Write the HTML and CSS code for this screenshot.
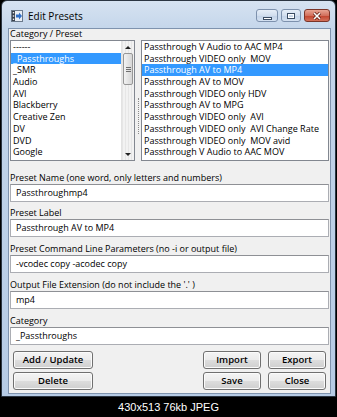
FILE: index.html
```html
<!doctype html>
<html lang="en">

<head>
<meta charset="utf-8">
<title>Edit Presets</title>

<link rel="stylesheet" href="styles.css">

</head>

<body>

<div id="shot">

  <div class="window">

    <!-- title bar -->
    <div class="titlebar">
      <svg class="app-icon" width="12" height="12" viewBox="0 0 12 12">
        <rect x="0.5" y="0.5" width="11" height="11" fill="#e9eef5" stroke="#6b7a8c"/>
        <rect x="1" y="1" width="3" height="10" fill="#39414d"/>
        <rect x="1.8" y="2" width="1.4" height="1.4" fill="#e9eef5"/>
        <rect x="1.8" y="5.3" width="1.4" height="1.4" fill="#e9eef5"/>
        <rect x="1.8" y="8.6" width="1.4" height="1.4" fill="#e9eef5"/>
        <path d="M5 4.5h3V2.5l3 3.5-3 3.5V7.5H5z" fill="#2f6fc8"/>
      </svg>
      <span class="title">Edit Presets</span>
      <div class="caption-buttons">
        <span class="cap min"><i></i></span>
        <span class="cap max"><i></i></span>
        <span class="cap close">
          <svg width="10" height="8" viewBox="0 0 10 8">
            <path d="M2 1l6 6M8 1L2 7" stroke="#5a1a10" stroke-width="3"/>
            <path d="M2 1l6 6M8 1L2 7" stroke="#fff" stroke-width="1.6"/>
          </svg>
        </span>
      </div>
    </div>

    <!-- client area -->
    <div class="client">
      <div class="top-label">Category / Preset</div>

      <div class="lists">
        <div class="listbox categories">
          <ul>
            <li>------</li>
            <li class="selected">_Passthroughs</li>
            <li>_SMR</li>
            <li>Audio</li>
            <li>AVI</li>
            <li>Blackberry</li>
            <li>Creative Zen</li>
            <li>DV</li>
            <li>DVD</li>
            <li>Google</li>
          </ul>
          <div class="vscroll">
            <span class="arrow up"></span>
            <div class="track">
              <div class="thumb"><i></i><i></i><i></i></div>
            </div>
            <span class="arrow down"></span>
          </div>
        </div>

        <div class="splitter"></div>

        <div class="listbox presets">
          <ul>
            <li>Passthrough V Audio to AAC MP4</li>
            <li>Passthrough VIDEO only  MOV</li>
            <li class="selected">Passthrough AV to MP4</li>
            <li>Passthrough AV to MOV</li>
            <li>Passthrough VIDEO only HDV</li>
            <li>Passthrough AV to MPG</li>
            <li>Passthrough VIDEO only  AVI</li>
            <li>Passthrough VIDEO only  AVI Change Rate</li>
            <li>Passthrough VIDEO only  MOV avid</li>
            <li>Passthrough V Audio to AAC MOV</li>
          </ul>
        </div>
      </div>

      <div class="fields">
        <div class="field">
          <label>Preset Name (one word, only letters and numbers)</label>
          <div class="textbox">Passthroughmp4</div>
        </div>
        <div class="field">
          <label>Preset Label</label>
          <div class="textbox">Passthrough AV to MP4</div>
        </div>
        <div class="field">
          <label>Preset Command Line Parameters (no -i or output file)</label>
          <div class="textbox">-vcodec copy -acodec copy</div>
        </div>
        <div class="field">
          <label>Output File Extension (do not include the '.' )</label>
          <div class="textbox">mp4</div>
        </div>
        <div class="field">
          <label>Category</label>
          <div class="textbox">_Passthroughs</div>
        </div>
      </div>

      <div class="buttons">
        <div class="button-col">
          <button class="wide">Add / Update</button>
          <button class="wide">Delete</button>
        </div>
        <div class="button-grid">
          <button>Import</button>
          <button>Export</button>
          <button>Save</button>
          <button>Close</button>
        </div>
      </div>
    </div>

  </div>

  <div class="thumb-caption">430x513 76kb JPEG</div>

</div>

</body>

</html>
```

FILE: styles.css
```css
html,
body {
  background: #000;
  margin: 0;
}

#shot {
  height: 417px;
  overflow: hidden;
  width: 337px;
}

#shot .window {
  background: linear-gradient(#d6e2f1, #c3d5ea 30px, #b6cbe5);
  border: 1px solid #2b3542;
  border-radius: 6px 6px 0 0;
  box-sizing: border-box;
  display: flex;
  flex-direction: column;
  font-family: "Open Sans", "Noto Sans", sans-serif;
  font-size: 9px;
  height: 397px;
  margin-left: 1px;
  width: 335px;
}

/* title bar */

#shot .titlebar {
  align-items: center;
  display: flex;
  flex: none;
  height: 27px;
}

#shot .titlebar .app-icon {
  margin-left: 9px;
  margin-top: 3px;
}

#shot .titlebar .title {
  color: #000;
  font-size: 10px;
  margin-left: 5px;
  margin-top: 3px;
}

#shot .caption-buttons {
  display: flex;
  gap: 3px;
  margin-left: auto;
  margin-right: 5px;
  margin-top: 2px;
}

#shot .cap {
  align-items: center;
  background: linear-gradient(#e6eef8, #d2deee 50%, #c2d2e7 51%, #d4e1f1);
  border: 1px solid #7d91ad;
  border-radius: 3px;
  box-sizing: border-box;
  display: flex;
  height: 13px;
  justify-content: center;
  width: 22px;
}

#shot .cap.max {
  width: 20px;
}

#shot .cap.close {
  background: linear-gradient(#e8a493, #d2705d 50%, #c1422c 51%, #d3705a);
  border-color: #7a3428;
  width: 26px;
}

#shot .cap.min i {
  background: #fff;
  border: 1px solid #3b4c63;
  height: 1px;
  margin-top: 5px;
  width: 7px;
}

#shot .cap.max i {
  border: 1px solid #3b4c63;
  box-shadow: inset 0 0 0 1px #fff;
  height: 4px;
  width: 6px;
}

/* client area */

#shot .client {
  background: #f0f0f0;
  border: 1px solid #7f93ae;
  box-sizing: border-box;
  flex: 1;
  margin: 0 4px 2px 6px;
  padding: 0 1px;
}

#shot .top-label {
  height: 11px;
  line-height: 10px;
}

#shot .lists {
  display: flex;
  height: 121px;
}

#shot .listbox {
  background: #fff;
  border: 1px solid #828790;
  box-sizing: border-box;
  display: flex;
  overflow: hidden;
}

#shot .listbox.categories {
  width: 125px;
}

#shot .listbox.presets {
  flex: 1;
}

#shot .listbox ul {
  flex: 1;
  list-style: none;
  margin: 0;
  overflow: hidden;
  padding: 0;
}

#shot .listbox li {
  height: 11.7px;
  line-height: 11.7px;
  padding-left: 2px;
  white-space: pre;
}

#shot .listbox li.selected {
  background: #3399ff;
  color: #fff;
}

#shot .splitter {
  display: flex;
  justify-content: center;
  width: 6px;
}

#shot .splitter::before {
  border-left: 1px dotted #8a8a8a;
  content: "";
  height: 36px;
  margin-top: 58px;
}

/* scrollbar */

#shot .vscroll {
  background: repeating-linear-gradient(90deg, #e6e6e6 0 1px, #f2f2f2 1px 3px);
  border-left: 1px solid #e3e3e3;
  display: flex;
  flex-direction: column;
  width: 12px;
}

#shot .vscroll .arrow {
  align-items: center;
  display: flex;
  height: 12px;
  justify-content: center;
}

#shot .vscroll .arrow::before {
  border-left: 3px solid transparent;
  border-right: 3px solid transparent;
  content: "";
  height: 0;
  width: 0;
}

#shot .vscroll .arrow.up::before {
  border-bottom: 3px solid #222;
}

#shot .vscroll .arrow.down::before {
  border-top: 3px solid #222;
}

#shot .vscroll .track {
  flex: 1;
}

#shot .vscroll .thumb {
  align-items: center;
  background: linear-gradient(90deg, #f3f3f3, #e4e4e4 50%, #d6d6d6);
  border: 1px solid #979797;
  border-radius: 2px;
  box-sizing: border-box;
  display: flex;
  flex-direction: column;
  gap: 1px;
  height: 32px;
  justify-content: center;
  margin: 0 1px;
}

#shot .vscroll .thumb i {
  border-top: 1px solid #6f6f6f;
  width: 5px;
}

/* text fields */

#shot .fields {
  padding-top: 4.8px;
}

#shot .field {
  margin-top: 4.75px;
}

#shot .field label {
  display: block;
  height: 13px;
  line-height: 13px;
}

#shot .textbox {
  background: #fff;
  border: 1px solid #abadb3;
  border-top-color: #8e9095;
  box-sizing: border-box;
  height: 18px;
  line-height: 16px;
  padding-left: 5px;
}

/* buttons */

#shot .buttons {
  display: flex;
  justify-content: space-between;
  margin-top: 6px;
  padding: 0 3px;
}

#shot .button-col {
  display: flex;
  flex-direction: column;
  gap: 3px;
}

#shot .button-grid {
  display: grid;
  gap: 3px 7px;
  grid-template-columns: 58px 58px;
}

#shot button {
  background: linear-gradient(#f4f4f4, #ebebeb 50%, #dddddd 51%, #cfcfcf);
  border: 1px solid #707070;
  border-radius: 3px;
  box-shadow: inset 0 0 0 1px #fbfbfb;
  color: #000;
  font-family: inherit;
  font-size: 9.5px;
  font-weight: 600;
  height: 18px;
  padding: 0;
}

#shot button.wide {
  width: 80px;
}

/* forum thumbnail caption */

#shot .thumb-caption {
  color: #fff;
  font-family: "Liberation Sans", Arial, sans-serif;
  font-size: 11px;
  height: 20px;
  line-height: 20px;
  text-align: center;
}
```
